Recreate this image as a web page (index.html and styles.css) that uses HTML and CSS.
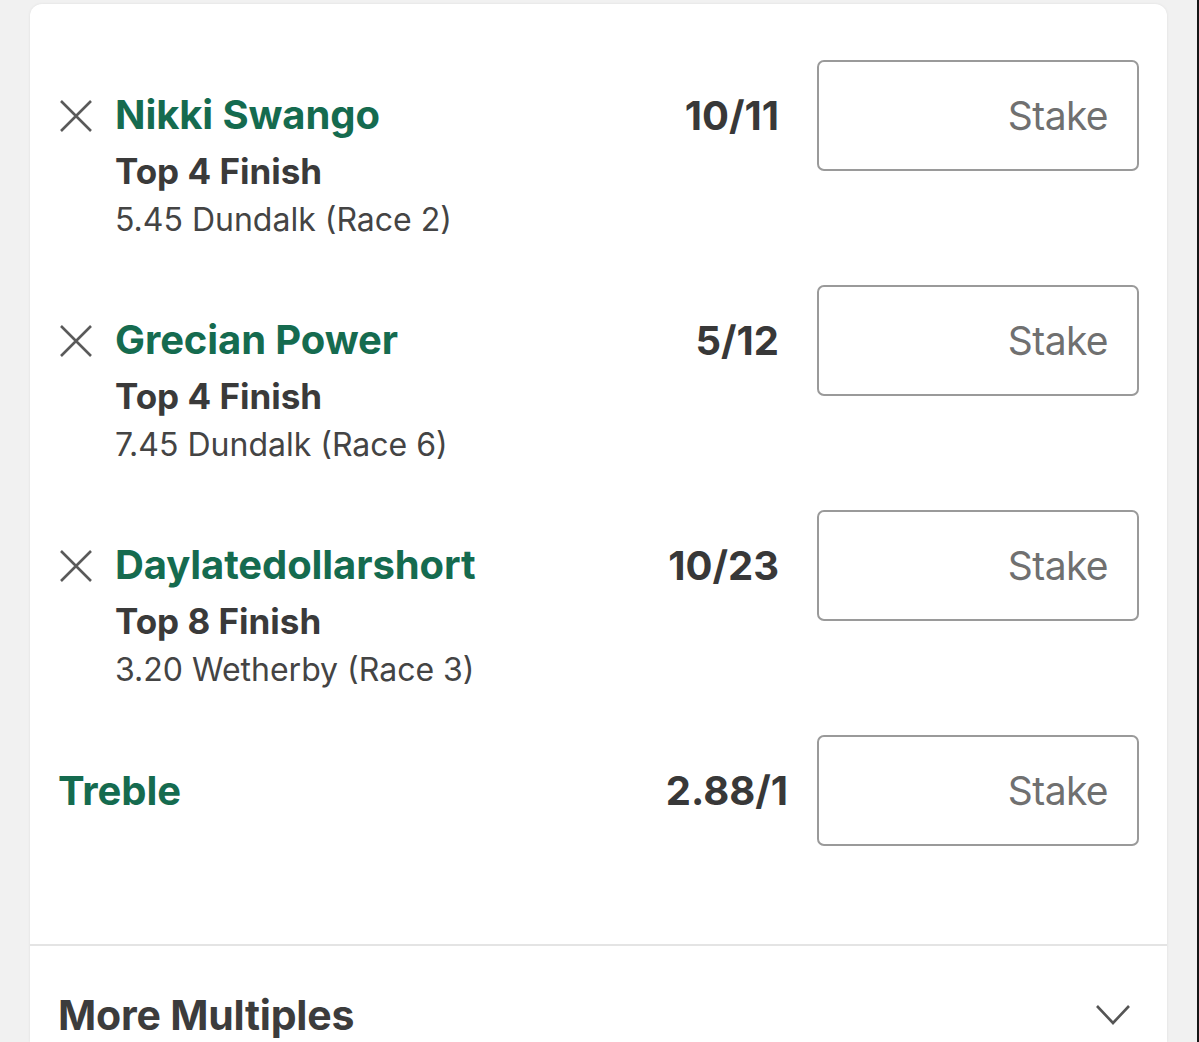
FILE: index.html
```html
<!DOCTYPE html>
<html lang="en">
<head>
  <meta charset="UTF-8">
  <title>Betslip</title>
  <link rel="stylesheet" href="styles.css">
</head>
<body>
  <div class="page">
    <div class="slip">

      <div class="bets">
        <!-- single 1 -->
        <div class="bet">
          <div class="remove">
            <svg width="34" height="32" viewBox="0 0 34 32"><path d="M2 1 L32 31 M32 1 L2 31" stroke="#5a5a5a" stroke-width="2.6" fill="none"/></svg>
          </div>
          <div class="info">
            <div class="name">Nikki Swango</div>
            <div class="market">Top 4 Finish</div>
            <div class="event">5.45 Dundalk (Race 2)</div>
          </div>
          <div class="odds">10/11</div>
          <input class="stake" type="text" placeholder="Stake">
        </div>

        <!-- single 2 -->
        <div class="bet">
          <div class="remove">
            <svg width="34" height="32" viewBox="0 0 34 32"><path d="M2 1 L32 31 M32 1 L2 31" stroke="#5a5a5a" stroke-width="2.6" fill="none"/></svg>
          </div>
          <div class="info">
            <div class="name">Grecian Power</div>
            <div class="market">Top 4 Finish</div>
            <div class="event">7.45 Dundalk (Race 6)</div>
          </div>
          <div class="odds">5/12</div>
          <input class="stake" type="text" placeholder="Stake">
        </div>

        <!-- single 3 -->
        <div class="bet">
          <div class="remove">
            <svg width="34" height="32" viewBox="0 0 34 32"><path d="M2 1 L32 31 M32 1 L2 31" stroke="#5a5a5a" stroke-width="2.6" fill="none"/></svg>
          </div>
          <div class="info">
            <div class="name">Daylatedollarshort</div>
            <div class="market">Top 8 Finish</div>
            <div class="event">3.20 Wetherby (Race 3)</div>
          </div>
          <div class="odds">10/23</div>
          <input class="stake" type="text" placeholder="Stake">
        </div>

        <!-- multiple -->
        <div class="bet multiple">
          <div class="info">
            <div class="name">Treble</div>
          </div>
          <div class="odds">2.88/1</div>
          <input class="stake" type="text" placeholder="Stake">
        </div>
      </div>

      <div class="more">
        <span>More Multiples</span>
        <svg width="36" height="22" viewBox="0 0 36 22"><path d="M2 2 L18 19 L34 2" stroke="#555" stroke-width="2.6" fill="none"/></svg>
      </div>

    </div>
  </div>
</body>
</html>
```

FILE: styles.css
```css
html, body {
  margin: 0;
  padding: 0;
  height: 100%;
}

body {
  background: #f1f1f1;
  font-family: 'Inter', 'Roboto', sans-serif;
  overflow: hidden;
}

.page {
  height: 100%;
  padding: 4px 30px 0 30px;
  border-right: 2px solid #161616;
  box-sizing: border-box;
}

.slip {
  width: 1137px;
  height: 100%;
  background: #fff;
  border-radius: 12px 12px 0 0;
  box-shadow: 0 0 3px rgba(0, 0, 0, 0.08);
}

.bets {
  display: flex;
  flex-direction: column;
  gap: 43px;
  padding: 56px 28px 98px 28px;
}

.bet {
  display: flex;
  align-items: flex-start;
}

.remove {
  width: 57px;
  height: 111px;
  box-sizing: border-box;
  padding-left: 1px;
  display: flex;
  align-items: center;
  flex-shrink: 0;
}

.info {
  flex: 1;
  padding-top: 31px;
}

.name {
  font-size: 40px;
  line-height: 48px;
  font-weight: 700;
  color: #156b4f;
  letter-spacing: -0.1px;
}

.market {
  margin-top: 9px;
  font-size: 35px;
  line-height: 46px;
  font-weight: 700;
  color: #3a3a3a;
}

.event {
  margin-top: 4px;
  font-size: 32px;
  line-height: 44px;
  color: #444;
}

.odds {
  height: 111px;
  display: flex;
  align-items: center;
  margin-right: 38px;
  font-size: 40px;
  font-weight: 700;
  color: #383838;
}

.multiple .info {
  padding-top: 0;
  height: 111px;
  display: flex;
  align-items: center;
}

.multiple .odds {
  margin-right: 29px;
}

.stake {
  width: 322px;
  height: 111px;
  box-sizing: border-box;
  border: 2px solid #9a9a9a;
  border-radius: 7px;
  padding: 0 29px 0 20px;
  text-align: right;
  font-family: 'Inter', 'Roboto', sans-serif;
  font-size: 39px;
  letter-spacing: -0.6px;
  color: #333;
  background: #fff;
  flex-shrink: 0;
}

.stake::placeholder {
  color: #707070;
}

.more {
  border-top: 2px solid #e4e4e4;
  display: flex;
  align-items: center;
  justify-content: space-between;
  padding: 44px 36px 0 28px;
  font-size: 41px;
  font-weight: 700;
  color: #3c3c3c;
}

.more span {
  letter-spacing: -0.2px;
}
```
